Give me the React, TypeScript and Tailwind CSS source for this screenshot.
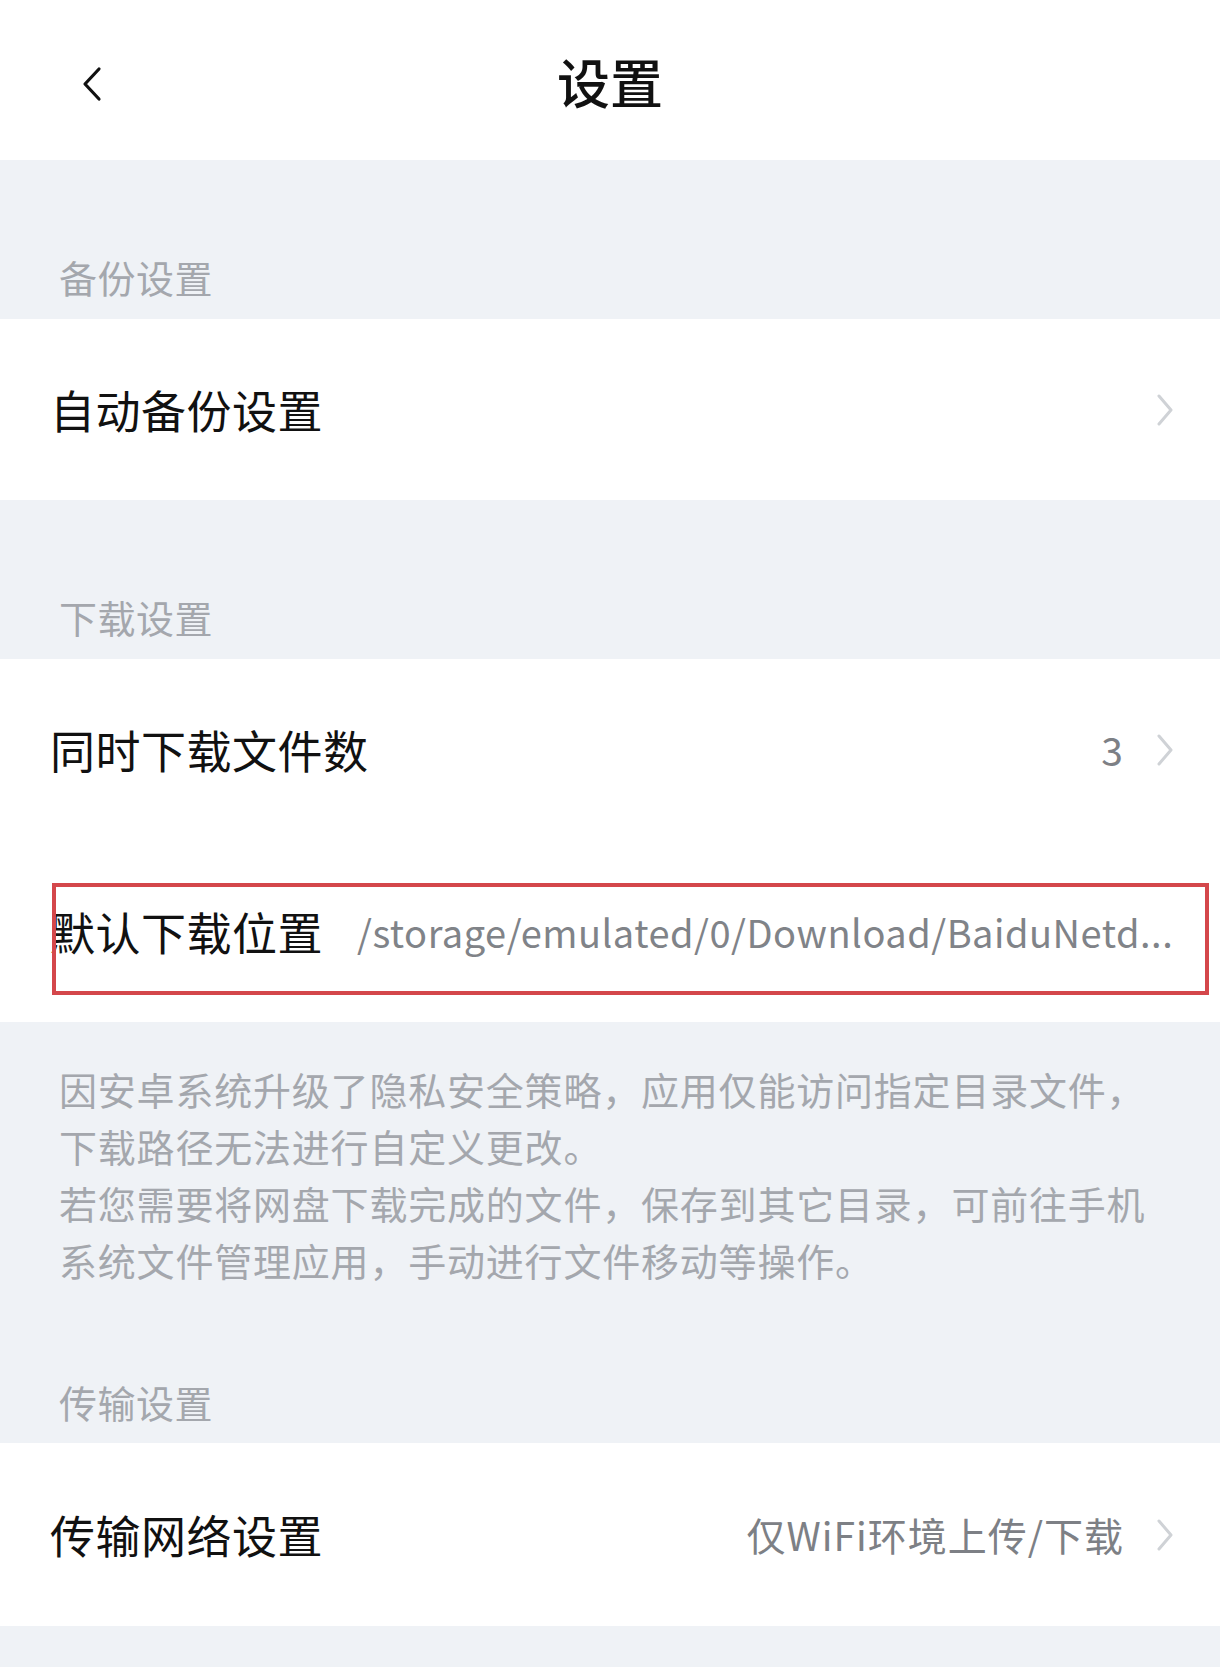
const FONT = "font-['Noto_Sans_CJK_SC','Noto_Sans',sans-serif]";

const Chevron = () => (
  <svg width="18" height="32" viewBox="0 0 18 32" className="shrink-0">
    <path d="M3 2 L15 16 L3 30" fill="none" stroke="#cfd2d6" strokeWidth="3" strokeLinecap="round" strokeLinejoin="round" />
  </svg>
);

const SectionTitle = ({ children }: { children: string }) => (
  <div className="h-[159px] flex items-end pl-[59px] pb-[22px]">
    <div className="text-[38px] leading-[40px] tracking-[0.5px] text-[#a4a7ad]">{children}</div>
  </div>
);

interface RowProps {
  label: string;
  value?: string;
  height?: string;
}

const Row = ({ label, value, height = "h-[181px]" }: RowProps) => (
  <div className={`${height} bg-white flex items-center pl-[50px] pr-[46px]`}>
    <div className="text-[45px] leading-none tracking-[0.5px] text-[#111111] whitespace-nowrap">{label}</div>
    <div className="flex-1" />
    {value && (
      <div className="text-[39px] leading-none tracking-[1px] text-[#7d8085] whitespace-nowrap mr-[32px]">{value}</div>
    )}
    <Chevron />
  </div>
);

export default function App() {
  return (
    <div className={`${FONT} w-[1220px] h-[1667px] bg-[#eff2f6] overflow-hidden`}>
      {/* Header */}
      <div className="h-[160px] bg-white relative flex items-center justify-center">
        <svg width="24" height="36" viewBox="0 0 24 36" className="absolute left-[80px] top-[66px]">
          <path d="M19 3 L5 18 L19 33" fill="none" stroke="#111" strokeWidth="3.2" strokeLinecap="round" strokeLinejoin="round" />
        </svg>
        <div className="text-[53px] leading-none font-medium text-[#111] pt-[2px]">设置</div>
      </div>

      <SectionTitle>备份设置</SectionTitle>
      <Row label="自动备份设置" />

      <SectionTitle>下载设置</SectionTitle>
      <Row label="同时下载文件数" value="3" />
      <div className="h-[182px] bg-white relative flex items-center pl-[50px] pr-[44px]">
        <div className="text-[45px] leading-none tracking-[0.5px] text-[#111111] whitespace-nowrap">默认下载位置</div>
        <div className="ml-[34px] flex-1 min-w-0 text-[38px] leading-normal tracking-[0.5px] text-[#808388] whitespace-nowrap">
          /storage/emulated/0/Download/BaiduNetd...
        </div>
        {/* annotation box */}
        <div className="absolute left-[52px] right-[11px] top-[43px] h-[112px] border-[4px] border-[#d4474b]" />
      </div>

      {/* Note */}
      <div className="pt-[38px] pl-[59px] text-[38px] leading-[57px] tracking-[0.8px] text-[#a4a7ad]">
        <div className="whitespace-nowrap">因安卓系统升级了隐私安全策略，应用仅能访问指定目录文件，</div>
        <div className="whitespace-nowrap">下载路径无法进行自定义更改。</div>
        <div className="whitespace-nowrap">若您需要将网盘下载完成的文件，保存到其它目录，可前往手机</div>
        <div className="whitespace-nowrap">系统文件管理应用，手动进行文件移动等操作。</div>
      </div>
      <div className="h-[155px] flex items-end pl-[59px] pb-[21px]">
        <div className="text-[38px] leading-[40px] tracking-[0.5px] text-[#a4a7ad]">传输设置</div>
      </div>
      <Row label="传输网络设置" value="仅WiFi环境上传/下载" height="h-[183px]" />
    </div>
  );
}
